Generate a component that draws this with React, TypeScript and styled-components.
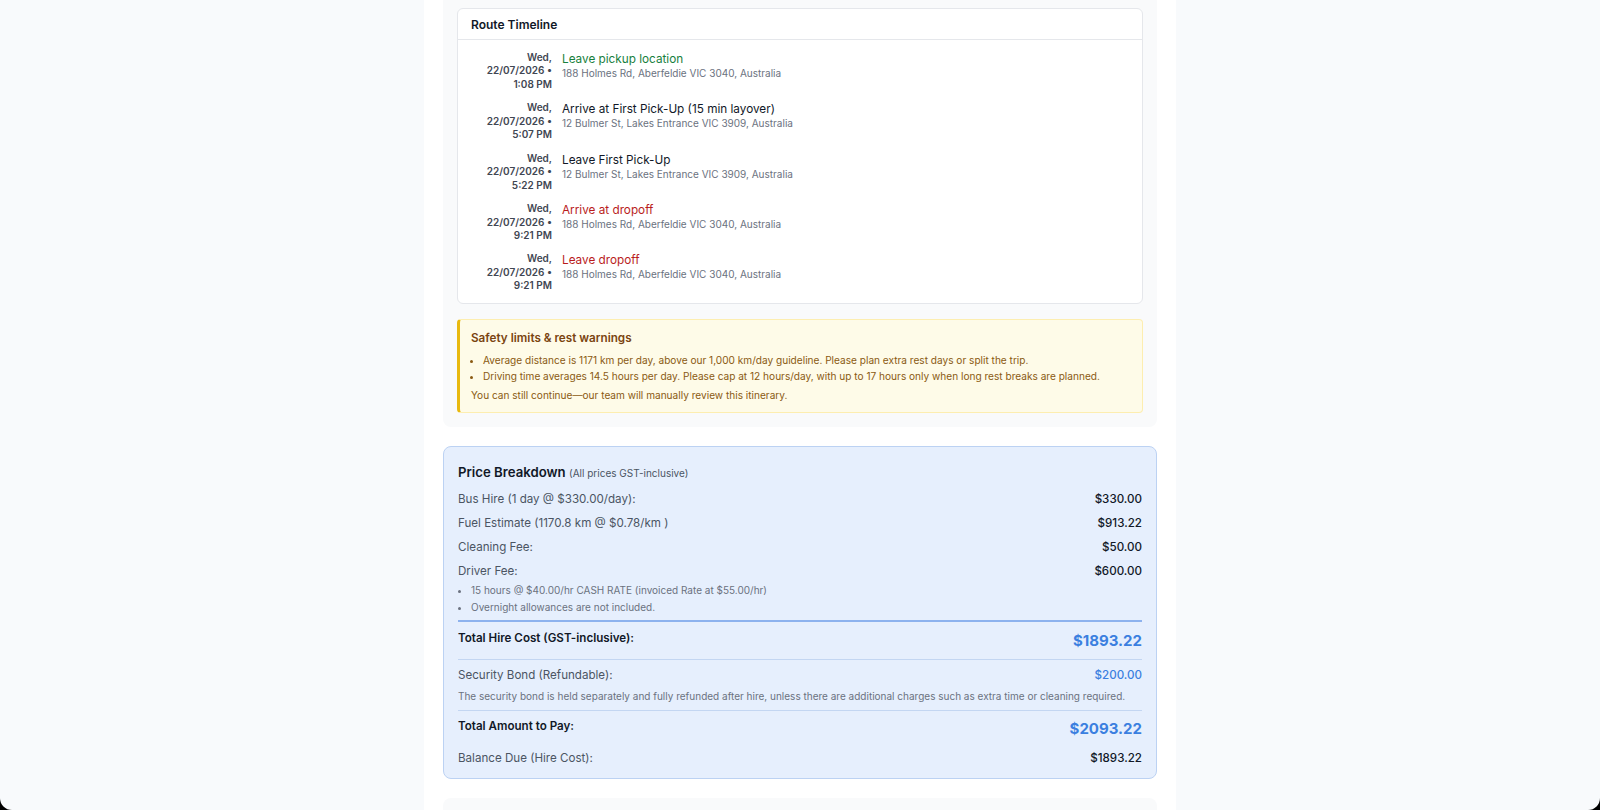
import React from "react";
import styled, { createGlobalStyle } from "styled-components";

const GlobalStyle = createGlobalStyle`
  html, body {
    margin: 0;
    padding: 0;
    background: #000;
  }
  body {
    font-family: Inter, "Noto Sans", "Liberation Sans", sans-serif;
    -webkit-font-smoothing: antialiased;
  }
  * { box-sizing: border-box; }
`;

interface TimelineStop {
  day: string;
  date: string;
  time: string;
  title: string;
  address: string;
  tone: "pickup" | "neutral" | "dropoff";
}

const stops: TimelineStop[] = [
  { day: "Wed,", date: "22/07/2026 •", time: "1:08 PM", title: "Leave pickup location", address: "188 Holmes Rd, Aberfeldie VIC 3040, Australia", tone: "pickup" },
  { day: "Wed,", date: "22/07/2026 •", time: "5:07 PM", title: "Arrive at First Pick-Up (15 min layover)", address: "12 Bulmer St, Lakes Entrance VIC 3909, Australia", tone: "neutral" },
  { day: "Wed,", date: "22/07/2026 •", time: "5:22 PM", title: "Leave First Pick-Up", address: "12 Bulmer St, Lakes Entrance VIC 3909, Australia", tone: "neutral" },
  { day: "Wed,", date: "22/07/2026 •", time: "9:21 PM", title: "Arrive at dropoff", address: "188 Holmes Rd, Aberfeldie VIC 3040, Australia", tone: "dropoff" },
  { day: "Wed,", date: "22/07/2026 •", time: "9:21 PM", title: "Leave dropoff", address: "188 Holmes Rd, Aberfeldie VIC 3040, Australia", tone: "dropoff" },
];

const toneColors = {
  pickup: "#17803d",
  neutral: "#111827",
  dropoff: "#b91c1c",
};

const lineItems = [
  { label: "Bus Hire (1 day @ $330.00/day):", value: "$330.00" },
  { label: "Fuel Estimate (1170.8 km @ $0.78/km )", value: "$913.22" },
  { label: "Cleaning Fee:", value: "$50.00" },
  { label: "Driver Fee:", value: "$600.00" },
];

const Frame = styled.div`
  height: 810px;
  overflow: hidden;
  background: #f8fafc;
  border-radius: 0 0 12px 12px;
`;

const Column = styled.main`
  width: 752px;
  height: 100%;
  margin: 0 auto;
  background: #ffffff;
  padding: 0 19px;
  display: flex;
  flex-direction: column;
  gap: 19px;
`;

const Panel = styled.section`
  background: #f9fafb;
  border-radius: 8px;
  padding: 14px 14px 14px;
  margin-top: -6px;
  display: flex;
  flex-direction: column;
  gap: 15px;
`;

const NextPanel = styled.section`
  background: #f9fafb;
  border-radius: 8px;
  height: 60px;
  flex-shrink: 0;
`;

const Card = styled.div`
  background: #ffffff;
  border: 1px solid #e5e7eb;
  border-radius: 6px;
`;

const CardHeader = styled.div`
  height: 31px;
  display: flex;
  align-items: center;
  padding: 0 13px;
  border-bottom: 1px solid #e5e7eb;
  font-size: 12px;
  font-weight: 600;
  color: #111827;
`;

const CardBody = styled.div`
  padding: 11px 16px 10px;
  display: flex;
  flex-direction: column;
  gap: 10px;
`;

const Stop = styled.div`
  display: flex;
  align-items: flex-start;
  gap: 10px;
`;

const StopWhen = styled.div`
  width: 78px;
  flex-shrink: 0;
  text-align: right;
  font-size: 10px;
  line-height: 13.45px;
  font-weight: 600;
  color: #3f4652;
`;

const StopInfo = styled.div`
  display: flex;
  flex-direction: column;
`;

const StopTitle = styled.div<{ $tone: TimelineStop["tone"] }>`
  font-size: 11.75px;
  line-height: 16px;
  color: ${(p) => toneColors[p.$tone]};
`;

const StopAddress = styled.div`
  font-size: 10px;
  line-height: 13px;
  color: #6b7280;
`;

const Warning = styled.div`
  background: #fefbe8;
  border: 1px solid #fdeeb0;
  border-left: 3px solid #e8b90f;
  border-radius: 4px;
  padding: 10px 12px 8px 11px;
  color: #8a5a12;
`;

const WarningTitle = styled.div`
  font-size: 11.7px;
  line-height: 16px;
  font-weight: 600;
  color: #7a4410;
  margin-bottom: 6px;
`;

const BulletList = styled.ul<{ $indent?: number }>`
  margin: 0;
  padding: 0 0 0 ${(p) => p.$indent ?? 13}px;
  list-style: disc;
`;

const WarningItem = styled.li`
  font-size: 10.1px;
  line-height: 16.3px;
`;

const WarningNote = styled.div`
  font-size: 10.1px;
  line-height: 17px;
  margin-top: 3px;
`;

const Breakdown = styled.section`
  background: #e6effd;
  border: 1px solid #bcd2f3;
  border-radius: 8px;
  padding: 16px 14px 11px;
  flex-shrink: 0;
`;

const BreakdownTitle = styled.h2`
  margin: 0 0 9px;
  font-size: 13.2px;
  line-height: 18px;
  font-weight: 600;
  color: #111827;
`;

const TitleHint = styled.span`
  font-size: 10px;
  font-weight: 400;
  color: #4b5563;
`;

const Rows = styled.div`
  display: flex;
  flex-direction: column;
  gap: 7px;
`;

const Row = styled.div<{ $top?: boolean }>`
  display: flex;
  justify-content: space-between;
  align-items: ${(p) => (p.$top ? "flex-start" : "center")};
`;

const Label = styled.span<{ $strong?: boolean }>`
  font-size: 11.6px;
  line-height: 17px;
  color: ${(p) => (p.$strong ? "#111827" : "#4b5563")};
  font-weight: ${(p) => (p.$strong ? 600 : 400)};
`;

const Amount = styled.span<{ $tone?: "plain" | "blue"; $big?: boolean }>`
  font-size: ${(p) => (p.$big ? "15px" : "11.6px")};
  line-height: ${(p) => (p.$big ? "22px" : "17px")};
  font-weight: ${(p) => (p.$big ? 700 : 500)};
  color: ${(p) => (p.$tone === "blue" ? "#3b7fe0" : "#111827")};
`;

const SubItem = styled.li`
  font-size: 10px;
  line-height: 16.5px;
  color: #6b7280;
`;

const SubList = styled.div`
  margin-top: 2px;
  padding-left: 1px;
`;

const Divider = styled.hr<{ $strong?: boolean }>`
  border: none;
  height: ${(p) => (p.$strong ? 2 : 1)}px;
  background: ${(p) => (p.$strong ? "#8db2ee" : "#c3d6f2")};
  margin: ${(p) => (p.$strong ? "5px 0 8px" : "7px 0 7px")};
`;

const Note = styled.p`
  margin: 5px 0 0;
  font-size: 10px;
  line-height: 14px;
  color: #6b7280;
`;

const Spaced = styled.div`
  margin-top: 10px;
`;

export default function App() {
  return (
    <Frame>
      <GlobalStyle />
      <Column>
        <Panel>
          <Card>
            <CardHeader>Route Timeline</CardHeader>
            <CardBody>
              {stops.map((s, i) => (
                <Stop key={i}>
                  <StopWhen>
                    <div>{s.day}</div>
                    <div>{s.date}</div>
                    <div>{s.time}</div>
                  </StopWhen>
                  <StopInfo>
                    <StopTitle $tone={s.tone}>{s.title}</StopTitle>
                    <StopAddress>{s.address}</StopAddress>
                  </StopInfo>
                </Stop>
              ))}
            </CardBody>
          </Card>
          <Warning>
            <WarningTitle>Safety limits &amp; rest warnings</WarningTitle>
            <BulletList $indent={12}>
              <WarningItem>
                Average distance is 1171 km per day, above our 1,000 km/day guideline. Please plan extra rest days or split the trip.
              </WarningItem>
              <WarningItem>
                Driving time averages 14.5 hours per day. Please cap at 12 hours/day, with up to 17 hours only when long rest breaks are planned.
              </WarningItem>
            </BulletList>
            <WarningNote>You can still continue—our team will manually review this itinerary.</WarningNote>
          </Warning>
        </Panel>

        <Breakdown>
          <BreakdownTitle>
            Price Breakdown <TitleHint>(All prices GST-inclusive)</TitleHint>
          </BreakdownTitle>
          <Rows>
            {lineItems.map((item) => (
              <Row key={item.label}>
                <Label>{item.label}</Label>
                <Amount>{item.value}</Amount>
              </Row>
            ))}
          </Rows>
          <SubList>
            <BulletList $indent={12}>
              <SubItem>15 hours @ $40.00/hr CASH RATE (invoiced Rate at $55.00/hr)</SubItem>
              <SubItem>Overnight allowances are not included.</SubItem>
            </BulletList>
          </SubList>
          <Divider $strong />
          <Row $top>
            <Label $strong>Total Hire Cost (GST-inclusive):</Label>
            <Amount $tone="blue" $big>$1893.22</Amount>
          </Row>
          <Divider />
          <Row>
            <Label>Security Bond (Refundable):</Label>
            <Amount $tone="blue">$200.00</Amount>
          </Row>
          <Note>
            The security bond is held separately and fully refunded after hire, unless there are additional charges such as extra time or cleaning required.
          </Note>
          <Divider />
          <Row $top>
            <Label $strong>Total Amount to Pay:</Label>
            <Amount $tone="blue" $big>$2093.22</Amount>
          </Row>
          <Spaced>
            <Row>
              <Label>Balance Due (Hire Cost):</Label>
              <Amount>$1893.22</Amount>
            </Row>
          </Spaced>
        </Breakdown>

        <NextPanel />
      </Column>
    </Frame>
  );
}
